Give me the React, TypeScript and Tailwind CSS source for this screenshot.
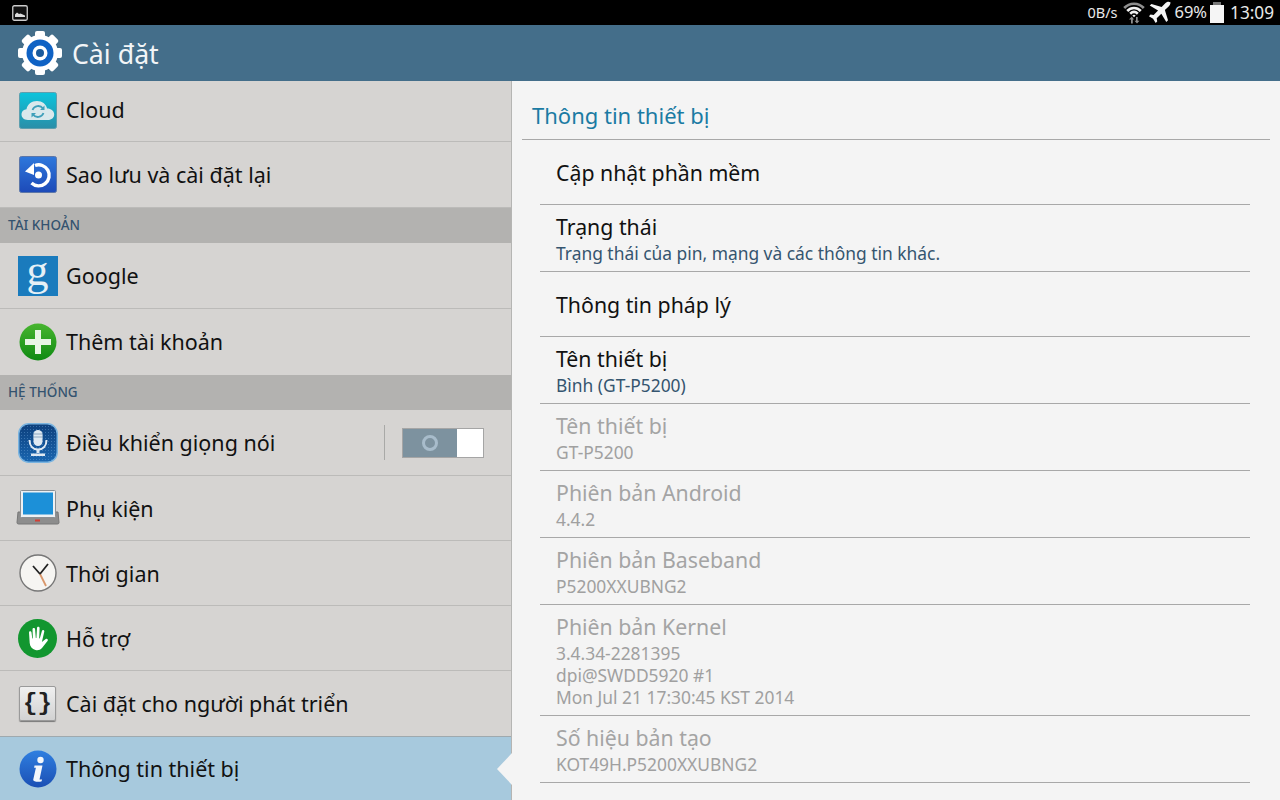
import type { ReactNode } from "react";

function StatusImageIcon() {
  return (
    <svg width="16" height="16" viewBox="0 0 16 16">
      <rect x="0.75" y="0.75" width="14.5" height="14.5" rx="1.5" fill="#111" stroke="#ccc" strokeWidth="1.3" />
      <path d="M3 12V9.5l2-2 2 1.6 1.5-.6 4.5 2V12z" fill="#ddd" />
    </svg>
  );
}

function WifiIcon() {
  return (
    <svg width="22" height="23" viewBox="0 0 22 22" fill="none">
      <path d="M1.2 6.500C6.500 .8 15.500 .8 20.800 6.500" stroke="#8f8f8f" strokeWidth="2.600" />
      <path d="M4.200 9.500C8 5.500 14 5.500 17.800 9.500" stroke="#f2f2f2" strokeWidth="2.600" />
      <path d="M7.200 12.200C9.500 10 12.500 10 14.800 12.200" stroke="#f2f2f2" strokeWidth="2.600" />
      <path d="M9.300 14a2.400 2.400 0 0 1 3.400 0L11 15.800z" fill="#f2f2f2" />
      <path d="M8 22v-4H6L8.800 15l2.200 3H9.800v4zM13 15.500v3.800h-1.500l2.500 2.700 2.500-2.700h-1.800v-3.800z" fill="#8f8f8f" />
    </svg>
  );
}

function PlaneIcon() {
  return (
    <svg width="23" height="23" viewBox="0 0 24 24" fill="#f5f5f5">
      <path d="M23 1.300c-1-1-3.200-.6-4.700.9l-4.100 4.100L3.600 3 1.800 4.800l8.700 5.200-4.600 4.700-3.300-.5L1 15.800l4.300 2.600L8 22.900l1.600-1.600-.5-3.400 4.800-4.700 5.200 8.800 1.800-1.800-3.300-10.700 4.200-4.100c1.500-1.500 2.100-3.600 1.200-4.500z" />
    </svg>
  );
}

function GearIcon() {
  const teeth = [0, 45, 90, 135, 180, 225, 270, 315];
  return (
    <svg width="46" height="46" viewBox="0 0 46 46">
      {teeth.map((a) => (
        <rect key={a} x="18" y="1" width="10" height="10" rx="2" fill="#fff" transform={`rotate(${a} 23 23)`} />
      ))}
      <circle cx="23" cy="23" r="18" fill="#fff" />
      <circle cx="23" cy="23" r="13.500" fill="#0f62c4" />
      <circle cx="23" cy="23" r="7.500" fill="#fff" />
      <circle cx="23" cy="23" r="4" fill="#1a5a9c" />
    </svg>
  );
}

function CloudIcon() {
  return (
    <svg width="38" height="38" viewBox="0 0 38 38">
      <defs>
        <linearGradient id="cl" x1="0" y1="0" x2="0" y2="1">
          <stop offset="0" stopColor="#0cc4dc" />
          <stop offset="1" stopColor="#2a8ea8" />
        </linearGradient>
      </defs>
      <rect x="0.500" y="0.500" width="37" height="36" rx="2" fill="url(#cl)" stroke="#5e9fae" />
      <path d="M9 28c-4.500 0-6.500-3-6.500-5.500 0-3 2.300-5 5-5.200C8.300 12.500 12.500 9 18 9c5.200 0 9 3 10.200 7.500 3.800 0 7 2.500 7 6 0 3-2.500 5.500-6.500 5.500z" fill="#d9e8ec" />
      <path d="M13.500 18a6 6 0 0 1 10.500-1.500M24.500 21a6 6 0 0 1-10.500 1.500" fill="none" stroke="#3f9fba" strokeWidth="1.800" />
      <path d="M25.500 13.500v4.500h-4.500zM12.500 25.500V21h4.500z" fill="#3f9fba" />
    </svg>
  );
}

function BackupIcon() {
  return (
    <svg width="38" height="38" viewBox="0 0 38 38">
      <defs>
        <linearGradient id="bk" x1="0" y1="0" x2="0" y2="1">
          <stop offset="0" stopColor="#2e78dc" />
          <stop offset="1" stopColor="#1d4ab8" />
        </linearGradient>
      </defs>
      <rect x="0.500" y="0.500" width="37" height="36" rx="2" fill="url(#bk)" stroke="#5c76a8" />
      <path d="M16 9.500a10.500 10.500 0 1 1-3.500 17.500" fill="none" stroke="#fff" strokeWidth="3.400" />
      <path d="M6 15.500l9-8.500v12z" fill="#fff" />
      <circle cx="19.500" cy="19" r="3.500" fill="#fff" />
    </svg>
  );
}

function GoogleIcon() {
  return (
    <div className="flex h-10 w-10 items-center justify-center bg-[#1a7bbd]">
      <span className="mb-[10px] font-['Liberation_Serif',serif] text-[44px] leading-none text-[#e6f0f6]">g</span>
    </div>
  );
}

function PlusIcon() {
  return (
    <svg width="38" height="38" viewBox="0 0 38 38">
      <defs>
        <linearGradient id="pl" x1="0" y1="0" x2="0" y2="1">
          <stop offset="0" stopColor="#48b530" />
          <stop offset="1" stopColor="#0f8a12" />
        </linearGradient>
      </defs>
      <circle cx="19" cy="19" r="18.500" fill="url(#pl)" />
      <path d="M16 7h6v9h10v6H22v9h-6v-9H6v-6h10z" fill="#e8f5e4" />
    </svg>
  );
}

function MicIcon() {
  return (
    <svg width="40" height="40" viewBox="0 0 40 40">
      <defs>
        <linearGradient id="mc" x1="0" y1="0" x2="0" y2="1">
          <stop offset="0" stopColor="#0d3f7c" />
          <stop offset="1" stopColor="#1966b0" />
        </linearGradient>
        <pattern id="mcd" width="3" height="3" patternUnits="userSpaceOnUse">
          <rect width="1" height="1" fill="#6aa3d8" fillOpacity="0.45" />
        </pattern>
      </defs>
      <rect x="0.750" y="0.750" width="38.500" height="38.500" rx="10" fill="url(#mc)" stroke="#7ab4e0" strokeWidth="1.500" />
      <rect x="2" y="2" width="36" height="36" rx="9" fill="url(#mcd)" />
      <rect x="15.500" y="7" width="9" height="16" rx="4.500" fill="#dfe9f2" />
      <path d="M15.500 11h9M15.500 14h9" stroke="#8fa8c0" strokeWidth="1" />
      <path d="M11.500 17c0 6 3.500 9.500 8.500 9.500s8.500-3.500 8.500-9.500" fill="none" stroke="#dfe9f2" strokeWidth="2" />
      <path d="M18.500 26.500h3V30h-3zM13 30.500h14V33H13z" fill="#dfe9f2" />
    </svg>
  );
}

function AccessoryIcon() {
  return (
    <svg width="44" height="36" viewBox="0 0 44 36">
      <path d="M2 22h40l1 10.500a1.500 1.500 0 0 1-1.500 1.500h-39A1.500 1.500 0 0 1 1 32.500z" fill="#8d8d8d" stroke="#777" />
      <rect x="4.500" y="0.500" width="35" height="27" rx="1" fill="#eef1f3" stroke="#8a8f94" />
      <rect x="7" y="2.500" width="30" height="22" fill="#1c90d8" />
      <rect x="19" y="29.500" width="5" height="2" fill="#d23f35" />
    </svg>
  );
}

function ClockIcon() {
  return (
    <svg width="38" height="38" viewBox="0 0 38 38">
      <circle cx="19" cy="19" r="18" fill="#f6f5f2" stroke="#777" strokeWidth="1.400" />
      <path d="M21 20l6 12" stroke="#d9976a" strokeWidth="1.800" />
      <path d="M21 20l-7-8M21 20l8-10" stroke="#222" strokeWidth="1.800" />
    </svg>
  );
}

function HandIcon() {
  return (
    <svg width="39" height="39" viewBox="0 0 39 39">
      <circle cx="19.500" cy="19.500" r="19.500" fill="#12962f" />
      <path d="M11 13.500c0-1.600 2.300-1.600 2.500 0l.8 6 .6-.2-.4-9c0-1.700 2.500-1.700 2.600 0l.7 8.600h.6l.6-9.800c.1-1.700 2.600-1.600 2.600.1l-.4 10 .6.200 2.100-7.500c.4-1.600 2.700-1 2.400.6l-2.400 10.500 3.800-2.900c1.300-1 3 .6 1.800 1.900L24 29c-1.800 2-4 2.500-6.500 2-3.500-.8-5.500-3.500-5.800-7z" fill="#fff" />
    </svg>
  );
}

function BracesIcon() {
  return (
    <div className="flex h-[35px] w-[37px] items-center justify-center rounded-[2px] border border-[#9a9a9a] bg-gradient-to-b from-[#f0f0f0] to-[#d2d2d2] shadow-[0_1px_1px_#777]">
      <span className="font-['Liberation_Mono',monospace] text-[24px] leading-none font-bold text-[#222]">{"{}"}</span>
    </div>
  );
}

function InfoIcon() {
  return (
    <svg width="38" height="38" viewBox="0 0 38 38">
      <defs>
        <linearGradient id="nf" x1="0" y1="0" x2="0" y2="1">
          <stop offset="0" stopColor="#2f7fe0" />
          <stop offset="1" stopColor="#1b4fb4" />
        </linearGradient>
      </defs>
      <circle cx="19" cy="19" r="18.500" fill="url(#nf)" />
      <circle cx="21.500" cy="10" r="3.200" fill="#f4f7fb" />
      <path d="M15.500 15.500h8l-3 14c2 0 2.500-.3 2.500-.3l-.3 2c-2 .8-8.500 1-8.500-1.500l2.700-12h-1.800z" fill="#f4f7fb" />
    </svg>
  );
}

function NavRow({ icon, label, className, labelClass, children }: { icon: ReactNode; label: string; className: string; labelClass?: string; children?: ReactNode }) {
  return (
    <div className={`flex items-center border-b border-[#bcbbb9] ${className}`}>
      <div className="flex w-[66px] shrink-0 items-center justify-center pl-[9px]">{icon}</div>
      <span className={`text-[21.500px] leading-none text-[#111] ${labelClass ?? ""}`}>{label}</span>
      {children}
    </div>
  );
}

function SectionHeader({ label, className }: { label: string; className: string }) {
  return (
    <div className={`flex items-center bg-[#b3b2b0] pl-[8px] text-[13.500px] font-medium text-[#34536f] ${className}`}>
      {label}
    </div>
  );
}

function InfoRow({ title, lines, muted, className }: { title: string; lines?: string[]; muted?: boolean; className: string }) {
  return (
    <div className={`flex flex-col justify-center border-b border-[#a8a8a8] pl-[16px] ${className}`}>
      <div className={`text-[21.300px] leading-[30px] ${muted ? "text-[#a4a4a4]" : "text-[#111]"}`}>{title}</div>
      {lines?.map((line) => (
        <div key={line} className={`text-[17.400px] leading-[22px] ${muted ? "text-[#a0a0a0]" : "text-[#35556f]"}`}>
          {line}
        </div>
      ))}
    </div>
  );
}

export default function App() {
  return (
    <div className="flex h-[800px] w-[1280px] flex-col overflow-hidden bg-black font-['Noto_Sans',sans-serif]">
      <div className="flex h-[25px] shrink-0 items-center justify-between bg-black pr-[6px] pl-[12px]">
        <StatusImageIcon />
        <div className="flex items-center text-[#e8e8e8]">
          <span className="mr-[6px] text-[14.500px]">0B/s</span>
          <WifiIcon />
          <span className="mx-[3px]"><PlaneIcon /></span>
          <span className="text-[16.500px]">69%</span>
          <div className="mx-[3px] flex flex-col items-center">
            <div className="h-[3px] w-[8px] bg-[#777]" />
            <div className="h-[18px] w-[14px] bg-[#f5f5f5]" />
          </div>
          <span className="ml-[3px] text-[17.200px]">13:09</span>
        </div>
      </div>
      <div className="flex h-[56px] shrink-0 items-center bg-[#446e8a] pl-[17px]">
        <GearIcon />
        <span className="mt-[2px] ml-[9px] text-[26.700px] leading-none text-[#f2f5f7]">Cài đặt</span>
      </div>
      <div className="flex min-h-0 flex-1">
        <div className="flex w-[512px] shrink-0 flex-col border-r border-[#b5b5b3] bg-[#d6d4d2]">
          <NavRow icon={<CloudIcon />} label="Cloud" className="h-[61px]" labelClass="mb-[2px]" />
          <NavRow icon={<BackupIcon />} label="Sao lưu và cài đặt lại" className="h-[66px]" labelClass="mt-[1px]" />
          <SectionHeader label="TÀI KHOẢN" className="h-[35px]" />
          <NavRow icon={<GoogleIcon />} label="Google" className="h-[66px]" labelClass="mt-[1px]" />
          <NavRow icon={<PlusIcon />} label="Thêm tài khoản" className="h-[66px] border-b-0" />
          <SectionHeader label="HỆ THỐNG" className="h-[35px]" />
          <NavRow icon={<MicIcon />} label="Điều khiển giọng nói" className="h-[66px]" labelClass="mt-[1px]">
            <div className="ml-auto flex items-center">
              <div className="h-[35px] w-px bg-[#a9a9a7]" />
              <div className="mr-[27px] ml-[17px] flex h-[30px] w-[82px] border border-[#a5a5a5]">
                <div className="flex w-[54px] items-center justify-center bg-[#7d929f]">
                  <div className="mr-[1px] h-[16px] w-[16px] rounded-full border-[3px] border-[#a8bccb]" />
                </div>
                <div className="flex-1 bg-white" />
              </div>
            </div>
          </NavRow>
          <NavRow icon={<AccessoryIcon />} label="Phụ kiện" className="h-[65px]" labelClass="mt-[1px]" />
          <NavRow icon={<ClockIcon />} label="Thời gian" className="h-[65px]" labelClass="mt-[1px]" />
          <NavRow icon={<HandIcon />} label="Hỗ trợ" className="h-[65px]" labelClass="mt-[1px]" />
          <NavRow icon={<BracesIcon />} label="Cài đặt cho người phát triển" className="h-[66px] border-b-[#9fa9ae]" labelClass="mt-[1px]" />
          <div className="relative min-h-0 flex-1">
            <NavRow icon={<InfoIcon />} label="Thông tin thiết bị" className="h-[63px] border-b-0 bg-[#a7c9dd]" labelClass="mt-[1px]" />
            <div className="absolute top-[16px] right-[-1px] h-0 w-0 border-y-[16px] border-r-[15px] border-y-transparent border-r-[#f4f4f4]" />
          </div>
        </div>
        <div className="flex min-w-0 flex-1 flex-col bg-[#f4f4f4] pr-[10px] pl-[10px]">
          <div className="flex h-[59px] shrink-0 items-end border-b border-[#a8a8a8] pb-[9px] pl-[10px] text-[22px] leading-[30px] text-[#1b7ba3]">
            Thông tin thiết bị
          </div>
          <div className="flex flex-col pr-[20px] pl-[18px]">
            <InfoRow title="Cập nhật phần mềm" className="h-[65px] pt-[2px]" />
            <InfoRow title="Trạng thái" lines={["Trạng thái của pin, mạng và các thông tin khác."]} className="h-[67px]" />
            <InfoRow title="Thông tin pháp lý" className="h-[65px] pt-[2px]" />
            <InfoRow title="Tên thiết bị" lines={["Bình (GT-P5200)"]} className="h-[67px]" />
            <InfoRow title="Tên thiết bị" lines={["GT-P5200"]} muted className="h-[67px]" />
            <InfoRow title="Phiên bản Android" lines={["4.4.2"]} muted className="h-[67px]" />
            <InfoRow title="Phiên bản Baseband" lines={["P5200XXUBNG2"]} muted className="h-[67px]" />
            <InfoRow title="Phiên bản Kernel" lines={["3.4.34-2281395", "dpi@SWDD5920 #1", "Mon Jul 21 17:30:45 KST 2014"]} muted className="h-[111px]" />
            <InfoRow title="Số hiệu bản tạo" lines={["KOT49H.P5200XXUBNG2"]} muted className="h-[67px]" />
          </div>
        </div>
      </div>
    </div>
  );
}
